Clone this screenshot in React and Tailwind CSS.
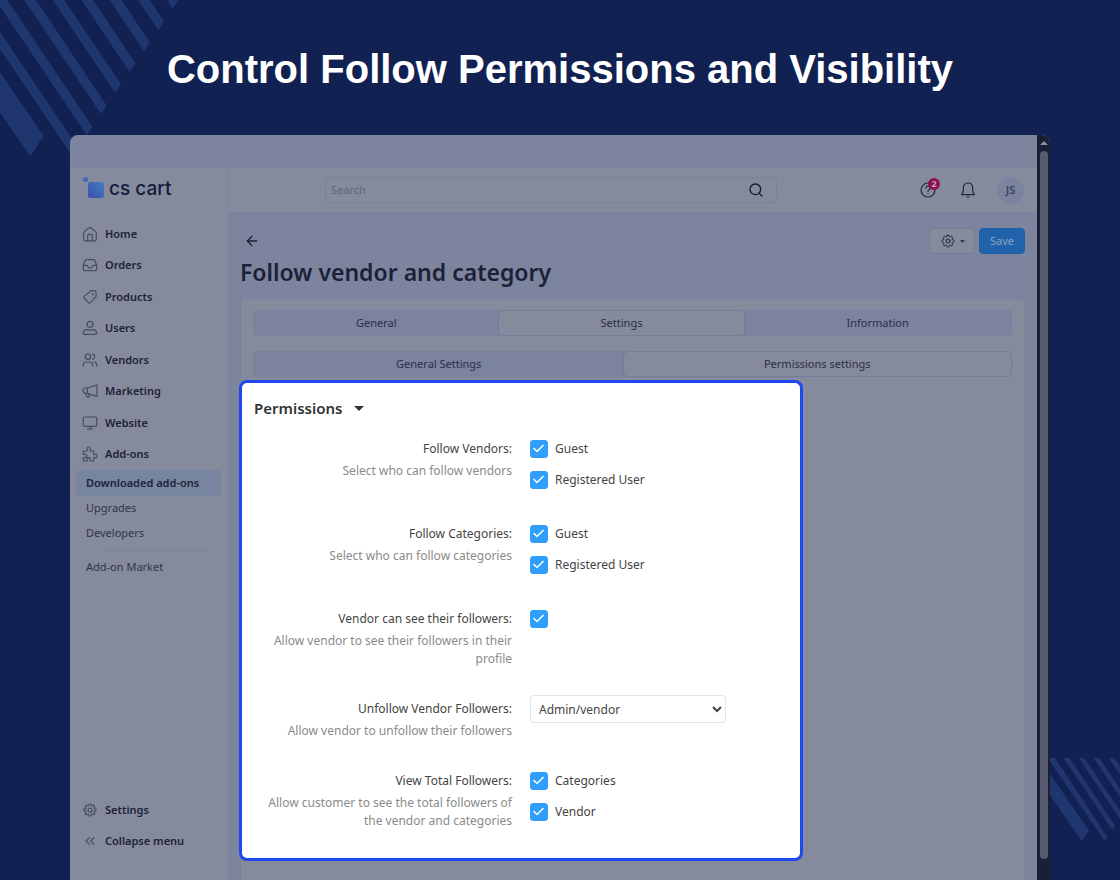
import { HiOutlineCog8Tooth } from 'react-icons/hi2';
import { ArrowLeft, ChevronsLeft, Monitor, Search, Users } from 'lucide-react';

const Icon = ({ children }) => (
    <svg viewBox="0 0 24 24" className="h-4 w-4" fill="none" stroke="currentColor" strokeWidth="1.800" strokeLinecap="round" strokeLinejoin="round" aria-hidden="true">
        {children}
    </svg>
);

const HomeIcon = () => (
    <Icon>
        <path d="M2.500 9.500 10 3a3 3 0 0 1 4 0l7.500 6.500V20a2.300 2.300 0 0 1-2.300 2.300H4.800A2.300 2.300 0 0 1 2.500 20z" />
        <path d="M8.500 22v-7.500a2 2 0 0 1 2-2h3a2 2 0 0 1 2 2V22" />
    </Icon>
);

const OrdersIcon = () => (
    <Icon>
        <path d="M2 12.500 4.700 5.500A2.500 2.500 0 0 1 7 4h10a2.500 2.500 0 0 1 2.300 1.500L22 12.500V18a2.500 2.500 0 0 1-2.500 2.500h-15A2.500 2.500 0 0 1 2 18z" />
        <path d="M2 12.500h4.500c2 0 2 4 5.500 4s3.500-4 5.500-4H22" />
    </Icon>
);

const ProductsIcon = () => (
    <Icon>
        <path d="M13.500 2.500h5.500a2 2 0 0 1 2 2v7L12.500 20.500a2 2 0 0 1-3 0L3.500 13.500a2 2 0 0 1 0-2.800z" />
        <circle cx="16" cy="8" r=".7" />
    </Icon>
);

const UserIcon = () => (
    <Icon>
        <circle cx="12" cy="6.500" r="4.500" />
        <path d="M2 20c0-3.500 2.500-5.500 6-5.500 1.500 0 2 .7 4 .7s2.500-.7 4-.7c3.500 0 6 2 6 5.500 0 1-.7 1.500-1.500 1.500h-17C2.700 21.500 2 21 2 20z" />
    </Icon>
);

const MarketingIcon = () => (
    <Icon>
        <path d="M22.500 3v17L8 15.500H5.500a4 4 0 0 1 0-8H8z" />
        <path d="M8 7.500v8M5.500 15.500 7.500 21h3.500l-1-5" />
    </Icon>
);

const AddonsIcon = () => (
    <Icon>
        <path d="M2 7.500h5c.8 0 1-.6.8-1.300C7 3.500 8 1.500 10 1.500s3 2 2.200 4.700c-.2.700 0 1.300.8 1.300h4.500v4.500c0 .8.500 1 1.200.800 2.300-.8 4.300.2 4.300 2.200s-2 3-4.300 2.200c-.7-.2-1.200 0-1.200.8v4.500H13c-.8 0-1-.5-.8-1.200C13 19 12 17.500 10 17.500S7 19 7.800 21.300c.2.700 0 1.200-.8 1.200H2V18c0-.8.500-1 1.200-.8C5.500 18 7 17 7 15s-1.500-3-3.800-2.200C2.500 13 2 12.800 2 12z" />
    </Icon>
);

const HelpIcon = () => (
    <Icon>
        <circle cx="12" cy="12" r="10.500" />
        <path d="M9 9a3 3 0 1 1 4.500 2.700c-1 .6-1.500 1.100-1.500 2.300M12 17.500v.1" />
    </Icon>
);

const BellIcon = () => (
    <Icon>
        <path d="M12 1.500c-4.500 0-7 3-7 7.500v4.500L2.500 19h19L19 13.500V9c0-4.500-2.500-7.500-7-7.500z" />
        <path d="M10.500 22.500h3" />
    </Icon>
);

const menu = [
    { label: 'Home', icon: HomeIcon },
    { label: 'Orders', icon: OrdersIcon },
    { label: 'Products', icon: ProductsIcon },
    { label: 'Users', icon: UserIcon },
    { label: 'Vendors', icon: Users },
    { label: 'Marketing', icon: MarketingIcon },
    { label: 'Website', icon: Monitor },
    { label: 'Add-ons', icon: AddonsIcon },
];

const footerMenu = [
    { label: 'Settings', icon: HiOutlineCog8Tooth },
    { label: 'Collapse menu', icon: ChevronsLeft },
];

const MenuItem = ({ label, icon: ItemIcon }) => (
    <li className="flex">
        <a href="#" className="flex flex-1 items-center gap-[7px] pl-3 text-[11px] font-semibold text-[#1d2238]">
            <span className="flex w-4 justify-center text-[#474d62]">
                <ItemIcon className="h-4 w-4" strokeWidth="1.800" />
            </span>
            {label}
        </a>
    </li>
);

const Sidebar = () => (
    <aside className="flex w-[159px] shrink-0 flex-col border-r-2 border-[#7f879f] bg-[#858a9c]">
        {/* Logo */}
        <a href="#" className="flex h-[50px] items-start pl-[13px] pt-[9px]" aria-label="cs cart">
            <svg viewBox="0 0 22 22" className="h-[22px] w-[22px]" aria-hidden="true">
                <defs>
                    <linearGradient id="logo" x1="0" y1="1" x2="1" y2="0">
                        <stop offset="0" stopColor="#3b4db0" />
                        <stop offset="1" stopColor="#437fbd" />
                    </linearGradient>
                </defs>
                <circle cx="2.500" cy="2.500" r="2.500" fill="#4066bd" />
                <rect x="5" y="5" width="16" height="16" rx="2.500" fill="url(#logo)" />
            </svg>
            <span className="pl-1 font-['Inter',sans-serif] text-[19px] font-medium leading-6 text-[#141c3c]">cs cart</span>
        </a>
        <ul className="grid h-[252px] auto-rows-fr">
            {menu.map(item => <MenuItem key={item.label} {...item} />)}
        </ul>

        {/* Add-ons submenu */}
        <ul className="text-[11px] text-[#2f354a]">
            <li className="px-1.5">
                <a href="#" className="flex h-[26px] items-center rounded bg-[#7885a0] pl-2.5 font-semibold text-[#1d2338]">Downloaded add-ons</a>
            </li>
            <li><a href="#" className="flex h-[25px] items-center pl-4">Upgrades</a></li>
            <li><a href="#" className="flex h-[25px] items-center pl-4">Developers</a></li>
            <li className="ml-9 mr-[22px] mt-1 border-t border-[#74829f]" />
            <li><a href="#" className="mt-1 flex h-[25px] items-center pl-4">Add-on Market</a></li>
        </ul>
        <ul className="mb-[23px] mt-auto grid h-[63px] auto-rows-fr">
            {footerMenu.map(item => <MenuItem key={item.label} {...item} />)}
        </ul>
    </aside>
);

const TopBar = () => (
    <header className="flex h-[45px] shrink-0 items-center border-b border-[#77819c] bg-[#858a9c] pr-[13px]">
        <div className="ml-24 flex h-[26px] w-[452px] items-center rounded border border-[#7a839d] pl-[5px] pr-3">
            <input type="search" aria-label="Search" placeholder="Search" className="min-w-0 flex-1 bg-transparent text-[11px] outline-none placeholder:text-[#5f667c]" />
            <button aria-label="Submit search" className="text-[#141a35]">
                <Search className="h-4 w-4" />
            </button>
        </div>
        <div className="ml-auto flex items-center text-[#21263c]">
            <button className="relative" aria-label="Help">
                <HelpIcon />
                <span className="absolute -right-1 -top-1 flex h-3 w-3 items-center justify-center rounded-full bg-[#8d0f4d] text-[9px] font-bold text-[#b9a3b8]">2</span>
            </button>
            <button className="ml-6" aria-label="Notifications">
                <BellIcon />
            </button>
            <button className="ml-[21px] flex h-[27px] w-[27px] items-center justify-center rounded-full bg-[#7b839e] text-[11px] font-semibold text-[#3c4258]">JS</button>
        </div>
    </header>
);

const Caret = ({ className }) => (
    <svg viewBox="0 0 10 5" className={className} fill="currentColor" aria-hidden="true">
        <path d="M0 0h10L5 5z" />
    </svg>
);

const Tabs = ({ items, active, columns }) => (
    <div role="tablist" className={`mx-3 grid h-[26px] rounded border border-[#79829c] bg-[#7b839e] text-[11px] text-[#2a3046] ${columns}`}>
        {items.map(item => (
            <button
                key={item}
                role="tab"
                aria-selected={item === active}
                className={`cursor-pointer rounded ${item === active ? 'bg-[#858a9c] shadow-[0_0_1px_1px_#747e9a]' : ''}`}
            >
                {item}
            </button>
        ))}
    </div>
);

const Checkbox = ({ id, label }) => (
    <div className="flex h-[22px] items-center gap-[7px]">
        <span className="grid">
            <input
                id={id}
                type="checkbox"
                defaultChecked
                className="peer col-start-1 row-start-1 h-[18px] w-[18px] appearance-none rounded-[3px] border border-[#2f9ffb] checked:bg-[#2f9ffb]"
            />
            <svg viewBox="0 0 18 18" className="pointer-events-none invisible col-start-1 row-start-1 h-[18px] w-[18px] peer-checked:visible" fill="none" stroke="#fff" strokeWidth="1.500" aria-hidden="true">
                <path d="M3.500 8 7 11.500 13.500 5" />
            </svg>
        </span>
        {label && <label htmlFor={id}>{label}</label>}
    </div>
);

const SettingRow = ({ label, htmlFor, hint, children }) => (
    <div className="grid grid-cols-[258px_1fr] gap-[18px]">
        <div className="text-right">
            {htmlFor
                ? <label htmlFor={htmlFor} className="block leading-[22px]">{label}</label>
                : <p className="leading-[22px]">{label}</p>}
            <p className="mt-0.5 leading-[18px] text-[#8a8a8a]">{hint}</p>
        </div>
        {children}
    </div>
);

const PermissionsPanel = () => (
    <section className="-ml-0.5 mt-[3px] w-[564px] rounded-lg border-[3px] border-[#2148ee] bg-white pb-7 pl-3 pt-3.5 text-xs text-[#444]">
        <h2 className="text-[15px] font-semibold leading-[22px] text-[#333]">
            <button className="flex cursor-pointer items-center gap-3">
                Permissions
                <Caret className="h-[5px] w-2.5" />
            </button>
        </h2>
        <div className="mt-[19px] flex flex-col gap-[30px]">
            <SettingRow label="Follow Vendors:" hint="Select who can follow vendors">
                <div className="flex flex-col gap-[9px] pb-0.5">
                    <Checkbox id="vendors-guest" label="Guest" />
                    <Checkbox id="vendors-registered" label="Registered User" />
                </div>
            </SettingRow>
            <SettingRow label="Follow Categories:" hint="Select who can follow categories">
                <div className="flex flex-col gap-[9px] pb-0.5">
                    <Checkbox id="categories-guest" label="Guest" />
                    <Checkbox id="categories-registered" label="Registered User" />
                </div>
            </SettingRow>
            <SettingRow label="Vendor can see their followers:" htmlFor="see-followers" hint="Allow vendor to see their followers in their profile">
                <Checkbox id="see-followers" />
            </SettingRow>
            <SettingRow label="Unfollow Vendor Followers:" htmlFor="unfollow" hint="Allow vendor to unfollow their followers">
                <div className="-mt-[3px]">
                    <select id="unfollow" defaultValue="both" className="h-7 w-[196px] rounded border border-[#dde5ef] bg-white pl-1">
                        <option value="both">Admin/vendor</option>
                        <option value="admin">Admin</option>
                    </select>
                </div>
            </SettingRow>
            <SettingRow label="View Total Followers:" hint="Allow customer to see the total followers of the vendor and categories">
                <div className="flex flex-col gap-[9px]">
                    <Checkbox id="total-categories" label="Categories" />
                    <Checkbox id="total-vendor" label="Vendor" />
                </div>
            </SettingRow>
        </div>
    </section>
);

const Content = () => (
    <main className="flex flex-1 flex-col pl-[11px] pr-3 pt-[15px]">
        <div className="flex h-[26px] items-center gap-1">
            <a href="#" aria-label="Back" className="ml-1 mr-auto text-[#1d2338]">
                <ArrowLeft className="h-4 w-4" />
            </a>
            <button aria-label="Actions" className="flex h-[26px] w-[46px] items-center justify-center gap-1 rounded border border-[#737d99] bg-[#858a9c] text-[#21263c]">
                <HiOutlineCog8Tooth className="h-4 w-4" />
                <Caret className="h-[3px] w-[5px]" />
            </button>
            <button className="h-[26px] w-[46px] rounded border border-[#1b5fa8] bg-[#2063ab] text-[11px] text-[#8da0bd]">Save</button>
        </div>
        <h1 className="mt-0.5 text-[23px] font-semibold leading-8 text-[#1c2138]">Follow vendor and category</h1>
        <div className="mt-2.5 flex-1 rounded-t border border-b-0 border-[#7a839d] bg-[#858a9c] pt-[11px]">
            <Tabs items={['General', 'Settings', 'Information']} active="Settings" columns="grid-cols-[245fr_246fr_267fr]" />
            <div className="h-[15px]" />
            <Tabs items={['General Settings', 'Permissions settings']} active="Permissions settings" columns="grid-cols-[370fr_388fr]" />
            <PermissionsPanel />
        </div>
    </main>
);

const Scrollbar = () => (
    <div className="flex w-[13px] shrink-0 flex-col items-center bg-[#1a1f35] pb-[21px] pt-1.5 text-[#8b90a2]" aria-hidden="true">
        <Caret className="h-1 w-2 shrink-0 rotate-180" />
        <div className="mt-1.5 w-2 flex-1 rounded-full bg-[#565b70]" />
    </div>
);

const Stripes = () => (
    <>
        <svg viewBox="0 0 540 480" className="absolute left-0 top-0 h-40 w-[180px]" fill="#20366f" aria-hidden="true">
            <path d="M500 0h35l-17 27z" />
            <path d="M414 0h35l43 64-17 26z" />
            <path d="M329 0h35l85 127-17 26z" />
            <path d="M244 0h35l127 190-17 26z" />
            <path d="M158 0h35l170 253-17 26z" />
            <path d="M73 0h35l212 317-17 25z" />
            <path d="M-13 0h35l255 380-17 25z" />
            <path d="M0 95 234 443l-17 25L0 147z" />
            <path d="M0 217 131 408 91 468 0 338z" />
        </svg>
        <svg viewBox="0 0 210 252" className="absolute right-0 top-[758px] h-[84px] w-[70px]" fill="#20366f" aria-hidden="true">
            <path d="M0 0h15l157 236-8 13L0 10z" />
            <path d="M41 0h17l137 203-8 13z" />
            <path d="M86 0h17l107 158v25z" />
            <path d="M131 0h17l62 92v25z" />
            <path d="M176 0h17l17 25v25z" />
            <path d="M0 48 117 218 95 249 0 111z" />
        </svg>
    </>
);

const App = () => (
    <div className="relative flex min-h-screen flex-col overflow-hidden bg-[#112151] px-[70px] font-['Noto_Sans',sans-serif]">
        <Stripes />
        <h1 className="relative flex h-[135px] items-center justify-center whitespace-nowrap pt-0.5 font-['Liberation_Sans',sans-serif] text-[40px] font-bold text-white">
            Control Follow Permissions and Visibility
        </h1>
        <div className="relative flex flex-1 overflow-hidden rounded-t-lg bg-[#7d859e]">
            <div className="flex min-w-0 flex-1 flex-col">
                <div className="h-[33px] shrink-0" />
                <div className="flex flex-1">
                    <Sidebar />
                    <div className="flex min-w-0 flex-1 flex-col">
                        <TopBar />
                        <Content />
                    </div>
                </div>
            </div>
            <Scrollbar />
        </div>
    </div>
);

export default App;
